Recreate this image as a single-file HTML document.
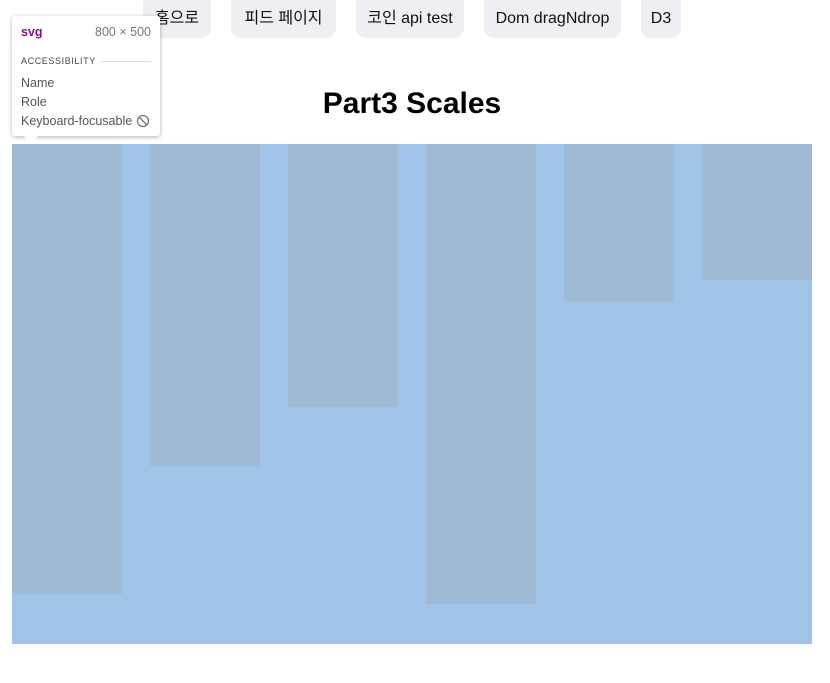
<!DOCTYPE html>
<html><head><meta charset="utf-8"><style>
body{margin:0;width:830px;height:683px;background:#fff;position:relative;overflow:hidden;font-family:"Liberation Sans","Noto Sans CJK KR",sans-serif}
.b{position:absolute;top:-10px;height:48px;background:#eeeef3;border-radius:10px;font-size:16px;color:#111;text-align:center;line-height:58px}
h1{position:absolute;top:85px;left:0;width:824px;margin:0;text-align:center;font-size:30px;font-weight:bold;line-height:38px}
.bar{position:absolute;top:144px;width:110px;background:#9fbad4}
.tip{position:absolute;left:12px;top:16px;width:148px;height:120px;background:#fff;border-radius:3px;box-shadow:0 1px 4px rgba(0,0,0,.3);font-size:12.5px;color:#555}
.tip div{position:absolute;left:9px}
</style></head><body>
<div class="b" style="left:143px;width:68px">홈으로</div>
<div class="b" style="left:231px;width:105px">피드 페이지</div>
<div class="b" style="left:356px;width:108px">코인 api test</div>
<div class="b" style="left:484px;width:137px">Dom dragNdrop</div>
<div class="b" style="left:641px;width:40px">D3</div>
<h1>Part3 Scales</h1>
<div style="position:absolute;left:12px;top:144px;width:800px;height:500px;background:#a0c3e7"></div>
<div class="bar" style="left:12px;height:450px"></div>
<div class="bar" style="left:150px;height:322px"></div>
<div class="bar" style="left:288px;height:263px"></div>
<div class="bar" style="left:426px;height:460px"></div>
<div class="bar" style="left:564px;height:158px"></div>
<div class="bar" style="left:702px;height:136px"></div>
<div class="tip">
<div style="top:9px;color:#881280;font-weight:bold">svg</div>
<div style="top:9px;left:auto;right:9px;color:#777">800 × 500</div>
<div style="top:40px;font-size:9px;letter-spacing:.6px;color:#444">ACCESSIBILITY</div>
<div style="top:45px;left:89px;width:50px;height:1px;background:#ddd"></div>
<div style="top:60px">Name</div>
<div style="top:79px">Role</div>
<div style="top:98px">Keyboard-focusable</div>
<svg style="position:absolute;left:124px;top:98px" width="14" height="14" viewBox="0 0 14 14"><circle cx="7" cy="7" r="5.5" fill="none" stroke="#777" stroke-width="1.3"/><path d="M3 3L11 11" stroke="#777" stroke-width="1.3"/></svg>
</div>
<div style="position:absolute;left:24px;top:136px;width:0;height:0;border-left:7px solid transparent;border-right:7px solid transparent;border-top:7px solid #fff"></div>
</body></html>
